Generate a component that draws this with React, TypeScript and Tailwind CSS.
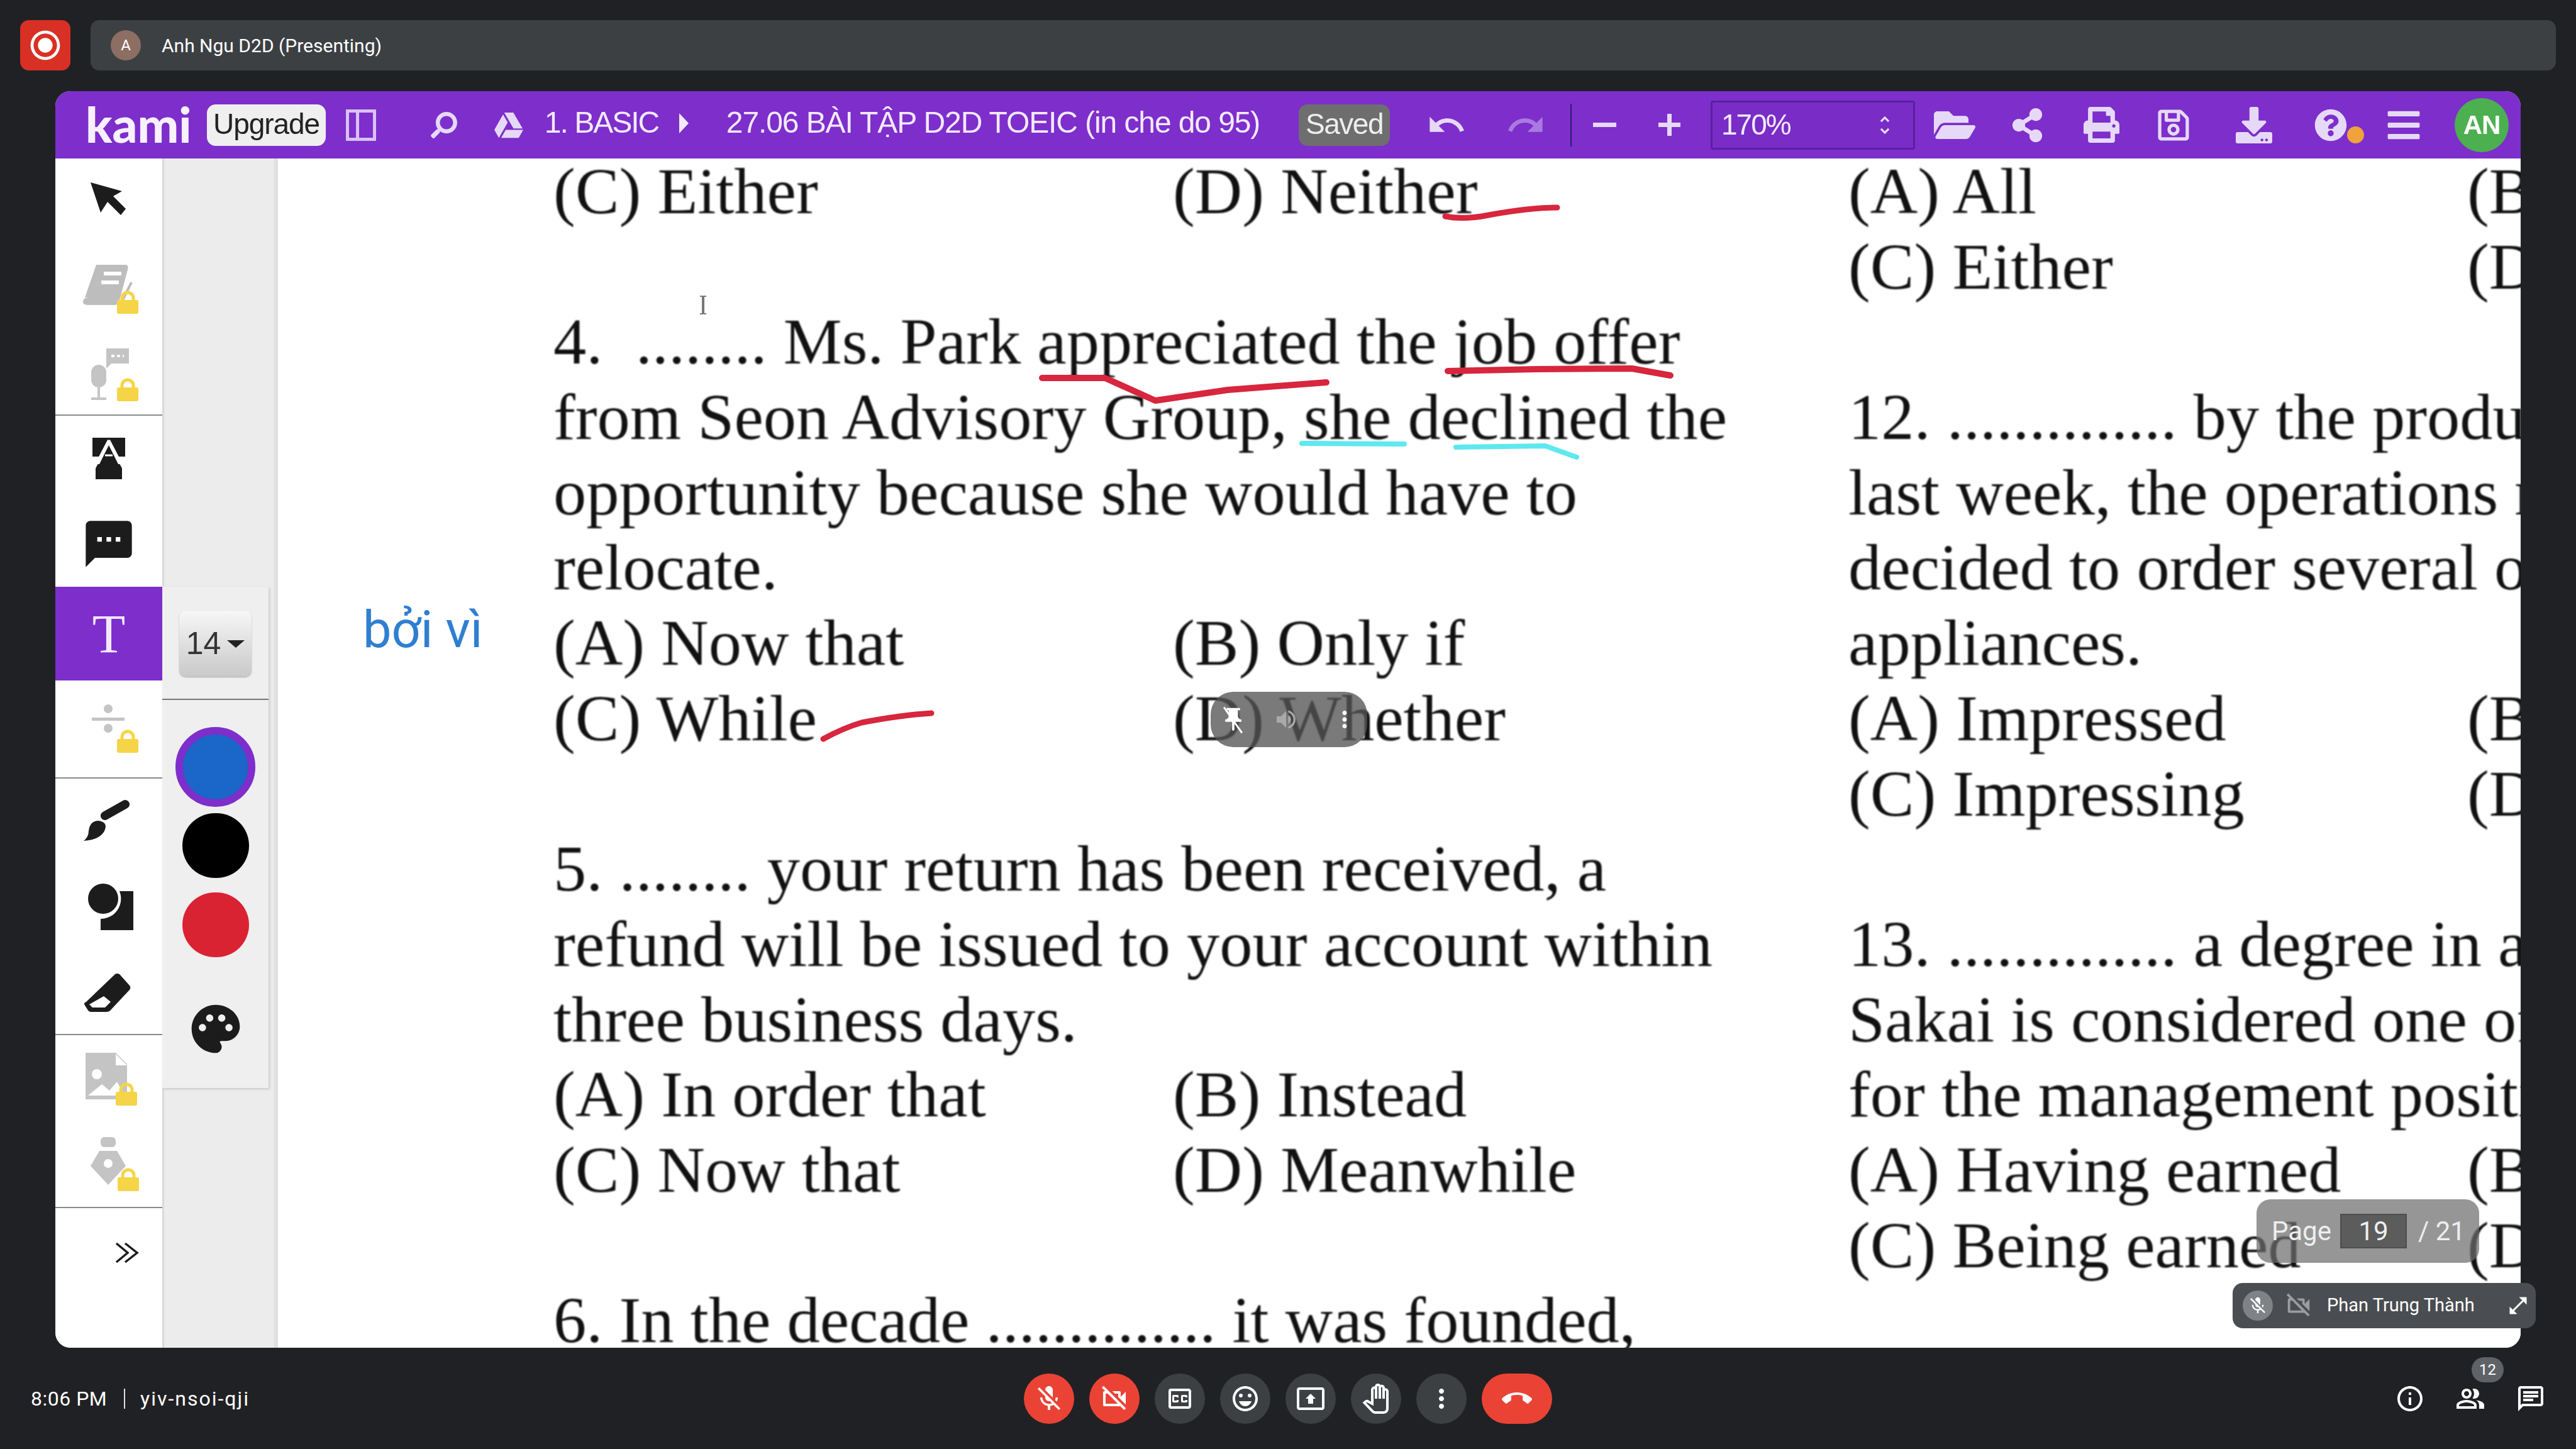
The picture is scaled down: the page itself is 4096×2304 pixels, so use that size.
import React from "react";
import {
  MdMicOff, MdOutlineVideocamOff, MdOutlineClosedCaption, MdOutlineEmojiEmotions, MdOutlinePresentToAll,
  MdOutlinePanTool, MdMoreVert, MdCallEnd, MdInfoOutline, MdOutlinePeopleAlt, MdOutlineChat, MdOpenInFull,
  MdUndo, MdRedo, MdPalette, MdSms, MdRadioButtonChecked, MdVolumeUp, MdPushPin, MdUnfoldMore,
} from "react-icons/md";
import { FaFolderOpen, FaShareAlt, FaPrint, FaRegSave, FaDownload, FaQuestionCircle, FaBars, FaGoogleDrive, FaSearch } from "react-icons/fa";

const Row = ({ a, b }: { a?: string; b?: string }) => (
  <div className="flex h-[119.7px] whitespace-pre">
    <div className="w-[985px] shrink-0">{a ?? " "}</div>
    <div>{b}</div>
  </div>
);
const RowR = ({ a, b }: { a?: string; b?: string }) => (
  <div className="flex h-[119.7px] whitespace-pre">
    <div className="w-[984px] shrink-0">{a ?? " "}</div>
    <div>{b}</div>
  </div>
);

const Lock = ({ pos = "left-[55px] top-[42px]" }: { pos?: string }) => (
  <svg viewBox="0 0 34 38" className={`absolute ${pos} w-[34px] h-[38px]`}>
    <path d="M8 18 V13 A9 9 0 0 1 26 13 V18" fill="none" stroke="#f5d547" strokeWidth="5" />
    <rect x="0" y="16" width="34" height="22" rx="3" fill="#f5d547" />
  </svg>
);

const RailItem = ({ children, h = "h-[136px]" }: { children: React.ReactNode; h?: string }) => (
  <div className={`${h} flex items-center justify-center shrink-0`}>{children}</div>
);

const Sep = () => <div className="h-[2px] bg-[#8a8a8a] shrink-0" />;

function Rail() {
  return (
    <div className="w-[170px] shrink-0 flex flex-col bg-white rounded-bl-[24px]">
      <div className="flex flex-col h-[407px] shrink-0">
        <RailItem>
          <svg viewBox="0 0 60 60" className="w-[60px] h-[60px] -translate-x-[1px] -translate-y-[2px]">
            <path d="M2 2 L52 16 L38 24 L58 44 L50 54 L29 33 L18 50 Z" fill="#1c1c1c" />
          </svg>
        </RailItem>
        <RailItem>
          <div className="relative w-[88px] h-[80px] translate-x-[2px] translate-y-[3px]">
            <svg viewBox="0 0 88 80" className="w-[88px] h-[80px]">
              <path d="M22 2 H68 Q74 2 72 10 L58 62 Q56 66 50 66 H10 Q0 66 1 60 Q2 54 10 54 L4 54 Z" fill="#bdbdbd" />
              <path d="M34 16 H62 M30 30 H58" stroke="#fff" strokeWidth="6" />
              <path d="M62 62 L78 30" stroke="#bdbdbd" strokeWidth="4" />
            </svg>
            <Lock />
          </div>
        </RailItem>
        <RailItem>
          <div className="relative w-[88px] h-[88px] translate-x-[2px] translate-y-[4px]">
            <svg viewBox="0 0 88 88" className="w-[88px] h-[88px]">
              <path d="M38 2 H74 V26 H46 L38 34 Z" fill="#c4c4c4" />
              <path d="M46 14 H66" stroke="#fff" strokeWidth="4" strokeDasharray="5 4" />
              <rect x="14" y="28" width="24" height="36" rx="12" fill="#c4c4c4" />
              <path d="M26 64 V80 M14 82 H38" stroke="#c4c4c4" strokeWidth="4" />
            </svg>
            <Lock pos="left-[55px] top-[48px]" />
          </div>
        </RailItem>
      </div>
      <Sep />
      <div className="flex flex-col h-[272px] shrink-0">
        <RailItem>
          <svg viewBox="0 0 58 70" className="w-[58px] h-[70px]">
            <path d="M3 2 H55 V32 L42 32 L29 8 L16 32 H3 Z" fill="#1c1c1c" />
            <path d="M29 14 L14 44 L8 44 L8 68 H50 V44 L44 44 Z" fill="#1c1c1c" />
            <path d="M29 6 L4 54 M29 6 L54 54" stroke="#fff" strokeWidth="4" fill="none" />
            <path d="M23 30 H35" stroke="#fff" strokeWidth="3" />
          </svg>
        </RailItem>
        <RailItem>
          <MdSms className="text-[88px] text-[#1c1c1c]" />
        </RailItem>
      </div>
      <div className="h-[149px] shrink-0 bg-[#7d2ecb] flex items-center justify-center font-['Liberation_Serif'] text-[86px] leading-none text-[#f3e8ff]">
        T
      </div>
      <div className="h-[154px] shrink-0 flex items-center justify-center">
        <div className="relative w-[88px] h-[88px] translate-x-[2px]">
          <svg viewBox="0 0 88 88" className="w-[88px] h-[88px]">
            <circle cx="41" cy="12" r="7" fill="#c4c4c4" />
            <rect x="15" y="26" width="52" height="5" fill="#c4c4c4" />
            <circle cx="41" cy="43" r="7" fill="#c4c4c4" />
          </svg>
          <Lock pos="left-[55px] top-[44px]" />
        </div>
      </div>
      <Sep />
      <div className="flex flex-col h-[406px] shrink-0">
        <RailItem>
          <svg viewBox="0 0 74 70" className="w-[74px] h-[70px] -translate-x-[3px]">
            <path d="M66 8 L34 26" stroke="#1c1c1c" strokeWidth="14" strokeLinecap="round" />
            <path d="M0 66 Q8 60 8 50 Q10 34 24 34 Q38 36 34 48 Q28 64 0 66 Z" fill="#1c1c1c" />
          </svg>
        </RailItem>
        <RailItem>
          <svg viewBox="0 0 72 74" className="w-[72px] h-[74px] translate-x-[3px]">
            <path d="M20 56 H72 V12 H50 A32 32 0 0 1 20 56Z M20 56 V74 H72 V56Z" fill="#1c1c1c" />
            <circle cx="24" cy="24" r="24" fill="#1c1c1c" />
          </svg>
        </RailItem>
        <RailItem>
          <svg viewBox="0 0 75 63" className="w-[75px] h-[63px] -translate-x-[3px]">
            <path d="M1 50 Q0 48 4 46 L50 2 Q53 0 57 2 L73 20 Q76 24 72 28 L42 60 Q40 62 36 62 H12 Q8 62 6 58 Z" fill="#1c1c1c" />
            <path d="M9 50 L32 37 L43 46 L34 55 H14 Z" fill="#fff" />
          </svg>
        </RailItem>
      </div>
      <Sep />
      <div className="flex flex-col h-[273px] shrink-0">
        <RailItem>
          <div className="relative w-[88px] h-[88px] translate-x-[3px]">
            <svg viewBox="0 0 88 88" className="w-[88px] h-[88px]">
              <path d="M4 4 H52 L70 22 V78 H4 Z" fill="#c4c4c4" />
              <path d="M52 6 V24 H70 Z" fill="#fff" />
              <circle cx="22" cy="38" r="8" fill="#fff" />
              <path d="M8 72 L30 54 L42 64 L54 50 L66 72 Z" fill="#fff" />
            </svg>
            <Lock pos="left-[52px] top-[50px]" />
          </div>
        </RailItem>
        <RailItem>
          <div className="relative w-[88px] h-[88px] translate-x-[3px]">
            <svg viewBox="0 0 88 88" className="w-[88px] h-[88px]">
              <rect x="28" y="2" width="24" height="16" rx="6" fill="#c4c4c4" />
              <path d="M26 24 H54 L68 48 L40 78 L12 48 Z" fill="#c4c4c4" />
              <circle cx="40" cy="44" r="7" fill="#fff" />
            </svg>
            <Lock pos="left-[55px] top-[50px]" />
          </div>
        </RailItem>
      </div>
      <Sep />
      <div className="flex pt-[52px] pl-[95px]">
        <svg viewBox="0 0 38 38" className="w-[38px] h-[38px]" fill="none" stroke="#1c1c1c" strokeWidth="3.5">
          <path d="M2 4 L20 19 L2 34 M16 4 L35 19 L16 34" />
        </svg>
      </div>
    </div>
  );
}

function Strip() {
  return (
    <div className="w-[184px] shrink-0 bg-[#ececec] border-l-[3px] border-[#dadada] border-r-[6px] border-r-[#e0e0e0] pt-[681px] flex flex-col box-border">
      <div className="w-[169px] h-[797px] -ml-[3px] bg-[#efefef] shadow-[2px_2px_4px_rgba(0,0,0,0.15)] flex flex-col">
        <div className="h-[180px] shrink-0 border-b-[2px] border-[#777] flex justify-center items-start pt-[38px] box-border">
          <div className="w-[115px] h-[105px] rounded-[10px] bg-gradient-to-b from-[#f7f7f7] to-[#c9c9c9] shadow-[0_1px_2px_rgba(0,0,0,0.3)] flex items-center justify-center gap-[10px] font-['Liberation_Sans'] text-[50px] text-[#333]">
            14
            <span className="w-0 h-0 border-l-[14px] border-r-[14px] border-t-[12px] border-l-transparent border-r-transparent border-t-[#222]" />
          </div>
        </div>
        <div className="flex flex-col items-center pt-[43px]">
          <div className="w-[127px] h-[127px] rounded-full border-[12px] border-[#7d2ecb] bg-[#1a66c9] mb-[10px] box-border" />
          <div className="w-[106px] h-[103px] rounded-full bg-black mb-[23px]" />
          <div className="w-[106px] h-[103px] rounded-full bg-[#da2332] mb-[68px]" />
          <MdPalette className="text-[92px] text-[#1c1c1c]" />
        </div>
      </div>
    </div>
  );
}

function Doc() {
  return (
    <div className="relative flex-1 min-w-0 bg-white overflow-hidden">
      <div className="flex -mt-[7px] font-['Liberation_Serif'] text-[104.5px] leading-[119.7px] text-[#111] pl-[438px] blur-[1px]">
        <div className="w-[2059px] shrink-0">
          <Row a="(C) Either" b="(D) Neither" />
          <Row />
          <Row a="4.  ........ Ms. Park appreciated the job offer" />
          <Row a="from Seon Advisory Group, she declined the" />
          <Row a="opportunity because she would have to" />
          <Row a="relocate." />
          <Row a="(A) Now that" b="(B) Only if" />
          <Row a="(C) While" b="(D) Whether" />
          <Row />
          <Row a="5. ........ your return has been received, a" />
          <Row a="refund will be issued to your account within" />
          <Row a="three business days." />
          <Row a="(A) In order that" b="(B) Instead" />
          <Row a="(C) Now that" b="(D) Meanwhile" />
          <Row />
          <Row a="6. In the decade .............. it was founded," />
        </div>
        <div className="flex-1">
          <RowR a="(A) All" b="(B)" />
          <RowR a="(C) Either" b="(D)" />
          <RowR />
          <RowR a="12. .............. by the production" />
          <RowR a="last week, the operations manager" />
          <RowR a="decided to order several of" />
          <RowR a="appliances." />
          <RowR a="(A) Impressed" b="(B)" />
          <RowR a="(C) Impressing" b="(D)" />
          <RowR />
          <RowR a="13. .............. a degree in a" />
          <RowR a="Sakai is considered one of" />
          <RowR a="for the management position" />
          <RowR a="(A) Having earned" b="(B)" />
          <RowR a="(C) Being earned" b="(D)" />
        </div>
      </div>
      {/* pen marks on the page: coordinates are relative to the document area (x-442, y-252) */}
      <svg className="absolute left-0 top-0 w-[3566px] h-[1891px] blur-[0.6px]" viewBox="0 0 3566 1891" fill="none" strokeLinecap="round" strokeLinejoin="round">
        <path d="M1856 92 Q1885 98 1925 90 Q1990 78 2034 78" stroke="#d7263d" strokeWidth="9" />
        <path d="M1215 349 H1315 L1395 385 L1510 368 L1667 356" stroke="#d7263d" strokeWidth="10" />
        <path d="M1860 338 L2000 335 L2153 334 L2214 345" stroke="#d7263d" strokeWidth="10" />
        <path d="M1628 453 L1791 454" stroke="#5ee8ef" strokeWidth="8" />
        <path d="M1873 459 L2015 457 L2065 475" stroke="#5ee8ef" strokeWidth="8" />
        <path d="M867 923 Q900 905 928 897 Q990 885 1039 882" stroke="#d7263d" strokeWidth="9" />
      </svg>
      <svg viewBox="0 0 14 30" className="absolute left-[669px] top-[215px] w-[14px] h-[36px]" fill="none" stroke="#555" strokeWidth="1.6">
        <path d="M2 1 H6 V29 H2 M12 1 H8 V29 H12" />
      </svg>
      <div className="absolute left-[135px] top-[702px] font-['Roboto'] text-[81px] leading-[96px] text-[#2f7fd1] blur-[0.6px] whitespace-nowrap">
        bởi vì
      </div>
      <div className="absolute left-[1483px] top-[848px] w-[249px] h-[88px] rounded-[36px] bg-[rgba(85,85,85,0.78)] flex items-center text-[#ddd]">
        <div className="relative ml-[14px]">
          <MdPushPin className="text-[44px] text-white" />
          <div className="absolute left-[20px] -top-[2px] w-[3px] h-[50px] bg-white -rotate-[35deg]" />
        </div>
        <MdVolumeUp className="ml-[42px] text-[40px] text-[#aaa]" />
        <MdMoreVert className="ml-[52px] text-[42px] text-white" />
      </div>
      <div className="absolute left-[3146px] top-[1655px] w-[354px] h-[101px] rounded-[22px] bg-[rgba(110,110,110,0.72)] flex items-center font-['Roboto'] text-[42px] text-[#eee] whitespace-nowrap pl-[24px]">
        <span className="w-[109px]">Page</span>
        <span className="w-[106px] h-[55px] bg-[#5c5c5c] border-[2px] border-[#4d4d4d] flex items-center justify-center">19</span>
        <span className="ml-[18px]">/ 21</span>
      </div>
    </div>
  );
}

const Tool = ({ ml, w, children }: { ml: string; w: string; children: React.ReactNode }) => (
  <div className={`${ml} ${w} shrink-0 flex items-center justify-center whitespace-nowrap`}>{children}</div>
);

function Toolbar() {
  const ic = "text-[#e6d9f7]";
  return (
    <div className="h-[107px] shrink-0 bg-[#7d2ecb] flex items-center pl-[48px] font-['Liberation_Sans'] text-[48px] text-[#f3eafc] blur-[0.7px]">
      <div className="w-[169px] shrink-0 font-['Lato'] font-black text-[78px] leading-none text-[#f7f0ff] -translate-y-[2px]">kami</div>
      <Tool ml="ml-[24px]" w="w-[189px]">
        <div className="w-[189px] h-[66px] rounded-[14px] bg-[#efefef] text-[#222] text-center leading-[62px] text-[46px] tracking-[-1.1px]">Upgrade</div>
      </Tool>
      <Tool ml="ml-[32px]" w="w-[48px]">
        <div className="w-[48px] h-[50px] border-[5px] border-[#d9c2f5] flex">
          <div className="w-[16px] border-r-[5px] border-[#d9c2f5]" />
        </div>
      </Tool>
      <Tool ml="ml-[86px]" w="w-[44px]"><FaSearch className={`${ic} text-[42px] -scale-x-100`} /></Tool>
      <Tool ml="ml-[58px]" w="w-[46px]"><FaGoogleDrive className={`${ic} text-[48px]`} /></Tool>
      <Tool ml="ml-[34px]" w="w-[181px]"><span className="tracking-[-2px] -translate-y-[4px]">1. BASIC</span></Tool>
      <Tool ml="ml-[33px]" w="w-[15px]">
        <span className="w-0 h-0 border-y-[16px] border-l-[15px] border-y-transparent border-l-[#f3eafc] -translate-y-[3px]" />
      </Tool>
      <Tool ml="ml-[60px]" w="w-[848px]"><span className="tracking-[-1.1px] -translate-y-[4px]">27.06 BÀI TẬP D2D TOEIC (in che do 95)</span></Tool>
      <Tool ml="ml-[62px]" w="w-[145px]">
        <div className="w-[145px] h-[66px] rounded-[14px] bg-[#6e6e6e] text-center leading-[62px] text-[46px] text-[#eee] tracking-[-1.5px]">Saved</div>
      </Tool>
      <Tool ml="ml-[65px]" w="w-[50px]"><MdUndo className={`${ic} text-[64px] shrink-0`} /></Tool>
      <Tool ml="ml-[75px]" w="w-[52px]"><MdRedo className="text-[#a97ae0] text-[64px] shrink-0" /></Tool>
      <div className="ml-[45px] w-[2px] h-[68px] bg-[#2c1a6e] shrink-0" />
      <Tool ml="ml-[34px]" w="w-[37px]"><div className="w-[37px] h-[7px] bg-[#e6d9f7]" /></Tool>
      <Tool ml="ml-[67px]" w="w-[35px]">
        <div className="relative w-[35px] h-[35px]">
          <div className="absolute left-0 top-[14px] w-[35px] h-[7px] bg-[#e6d9f7]" />
          <div className="absolute left-[14px] top-0 w-[7px] h-[35px] bg-[#e6d9f7]" />
        </div>
      </Tool>
      <div className="ml-[48px] w-[325px] h-[78px] shrink-0 box-border border-[3px] border-[#5a1f9e] rounded-[4px] bg-[#7a2cc6] flex items-center justify-between pl-[14px] pr-[26px] text-[46px]">
        <span className="tracking-[-2px]">170%</span>
        <MdUnfoldMore className={`${ic} text-[38px]`} />
      </div>
      <Tool ml="ml-[30px]" w="w-[65px]"><FaFolderOpen className={`${ic} text-[66px] shrink-0`} /></Tool>
      <Tool ml="ml-[57px]" w="w-[53px]"><FaShareAlt className={`${ic} text-[54px]`} /></Tool>
      <Tool ml="ml-[63px]" w="w-[57px]"><FaPrint className={`${ic} text-[57px]`} /></Tool>
      <Tool ml="ml-[60px]" w="w-[52px]"><FaRegSave className={`${ic} text-[56px] shrink-0`} /></Tool>
      <Tool ml="ml-[73px]" w="w-[58px]"><FaDownload className={`${ic} text-[58px]`} /></Tool>
      <Tool ml="ml-[67px]" w="w-[52px]">
        <div className="relative">
          <FaQuestionCircle className={`${ic} text-[52px]`} />
          <div className="absolute left-[52px] top-[28px] w-[27px] h-[27px] rounded-full bg-[#f0a23c]" />
        </div>
      </Tool>
      <Tool ml="ml-[62px]" w="w-[55px]"><FaBars className={`${ic} text-[58px] shrink-0`} /></Tool>
      <div className="ml-[54px] w-[86px] h-[86px] shrink-0 rounded-full bg-[#4caf50] flex items-center justify-center font-bold text-[42px] text-white tracking-[-1px]">AN</div>
    </div>
  );
}

const CallBtn = ({ red, wide, children }: { red?: boolean; wide?: boolean; children: React.ReactNode }) => (
  <div className={`${wide ? "w-[112px]" : "w-[80px]"} ${red ? "bg-[#ea4335]" : "bg-[#3c4043]"} h-[80px] rounded-full flex items-center justify-center text-white text-[48px]`}>
    {children}
  </div>
);

export default function App() {
  return (
    <div className="relative w-[4096px] h-[2304px] bg-[#202124] overflow-hidden flex flex-col font-['Roboto']">
      <div className="flex gap-[32px] px-[32px] pt-[32px] h-[112px] shrink-0 box-content">
        <div className="w-[80px] h-[80px] rounded-[14px] bg-[#d93025] flex items-center justify-center text-white text-[56px]">
          <MdRadioButtonChecked />
        </div>
        <div className="w-[3920px] h-[80px] rounded-[14px] bg-[#3c4043] flex items-center pl-[32px] text-white text-[30px]">
          <div className="w-[48px] h-[48px] rounded-full bg-[#8d6e63] flex items-center justify-center text-[24px]">A</div>
          <span className="ml-[33px]">Anh Ngu D2D (Presenting)</span>
        </div>
      </div>
      <div className="ml-[88px] mt-[1px] w-[3920px] h-[1998px] shrink-0 rounded-[24px] overflow-hidden flex flex-col bg-white">
        <Toolbar />
        <div className="flex flex-1 min-h-0">
          <Rail />
          <Strip />
          <Doc />
        </div>
      </div>
      <div className="relative flex-1 flex items-center justify-center">
        <div className="absolute left-[49px] top-[64px] flex items-center text-[32px] leading-[34px] text-white tracking-[0.5px]">
          <span className="w-[148px]">8:06 PM</span>
          <span className="w-[2px] h-[32px] bg-[#ddd]" />
          <span className="ml-[24px] tracking-[2px]">yiv-nsoi-qji</span>
        </div>
        <div className="flex gap-[24px] items-center">
          <CallBtn red><MdMicOff /></CallBtn>
          <CallBtn red><MdOutlineVideocamOff /></CallBtn>
          <CallBtn><MdOutlineClosedCaption /></CallBtn>
          <CallBtn><MdOutlineEmojiEmotions /></CallBtn>
          <CallBtn><MdOutlinePresentToAll /></CallBtn>
          <CallBtn><MdOutlinePanTool /></CallBtn>
          <CallBtn><MdMoreVert /></CallBtn>
          <CallBtn red wide><MdCallEnd /></CallBtn>
        </div>
        <div className="absolute left-[3808px] top-[57px] flex gap-[48px] text-white text-[48px]">
          <MdInfoOutline />
          <MdOutlinePeopleAlt />
          <MdOutlineChat />
        </div>
        <div className="absolute left-[3930px] top-[15px] w-[51px] h-[40px] rounded-full bg-[#5f6368] flex items-center justify-center text-[24px] text-white">12</div>
      </div>
      <div className="absolute left-[3550px] top-[2040px] w-[482px] h-[72px] rounded-[16px] bg-[#4a4d51] flex items-center pl-[16px] text-white text-[29px] whitespace-nowrap">
        <div className="w-[48px] h-[48px] rounded-full bg-[#7f8386] flex items-center justify-center text-[32px]"><MdMicOff /></div>
        <MdOutlineVideocamOff className="ml-[18px] text-[46px] text-[#9a9da0]" />
        <span className="ml-[22px] w-[286px]">Phan Trung Thành</span>
        <MdOpenInFull className="text-[36px]" />
      </div>
    </div>
  );
}
